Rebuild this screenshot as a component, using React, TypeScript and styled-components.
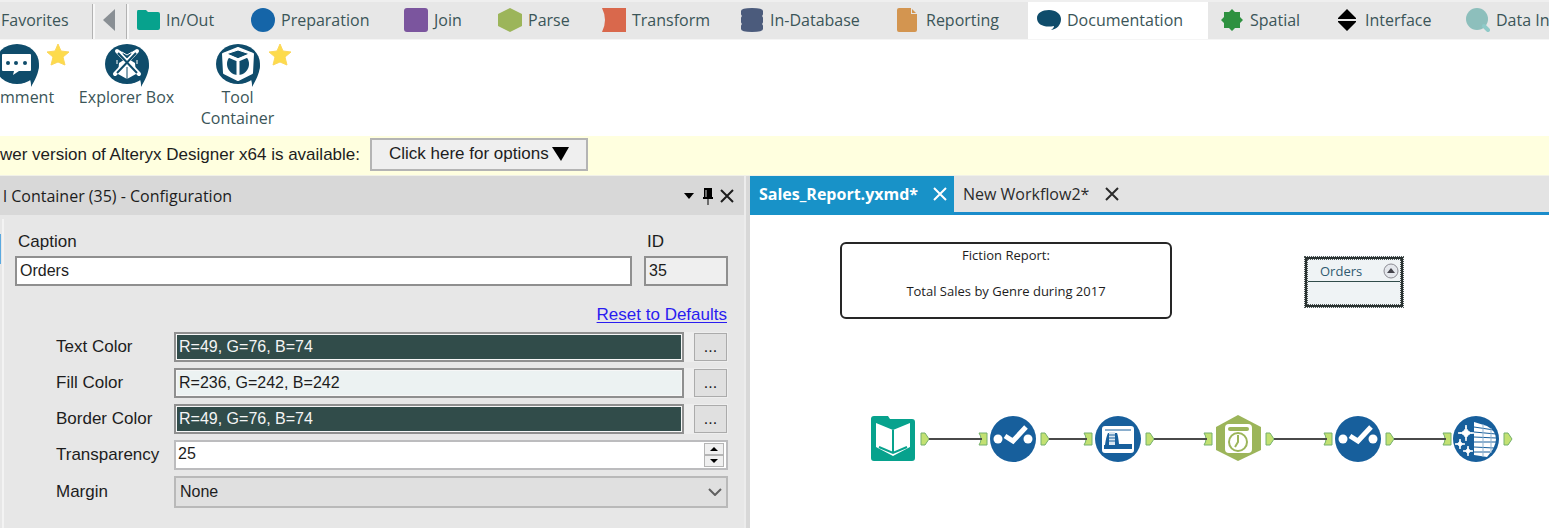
import React from "react";
import styled, { createGlobalStyle } from "styled-components";

const ui = `"Open Sans", "Noto Sans", sans-serif`;
const form = `"Liberation Sans", Arial, sans-serif`;

const GlobalStyle = createGlobalStyle`
  *, *::before, *::after { box-sizing: border-box; }
  body { margin: 0; background: #fff; font-family: ${ui}; font-size: 16px; color: #3b5558; overflow: hidden; }
  button, input, select { font: inherit; color: inherit; margin: 0; border-radius: 0; }
  svg { display: block; flex: none; }
`;

const Page = styled.div`
  display: flex;
  flex-direction: column;
  min-height: 100vh;
  overflow: hidden;
`;

/* ---------- Ribbon ---------- */

const CategoryBar = styled.nav`
  display: flex;
  height: 40px;
  padding-bottom: 1px;
  border-top: 2px solid #efefef;
  background: #e7e7e7;
  box-shadow: inset 0 -1px #f5f5f5;
  overflow: hidden;
`;

const BarButton = styled.button<{ $width: number }>`
  flex: none;
  display: flex;
  align-items: center;
  width: ${(p) => p.$width}px;
  margin: 2px 0 0;
  padding: 0 0 4px 1px;
  border: 0;
  border-right: 1px solid #b2b2b2;
  background: none;
  box-shadow: 2px 0 #f7f7f7;
`;

const ScrollButton = styled(BarButton)`
  padding-left: 10px;
`;

const Category = styled.button<{ $width: number; $active?: boolean }>`
  flex: none;
  display: flex;
  align-items: center;
  gap: 6px;
  width: ${(p) => p.$width}px;
  margin-right: ${(p) => (p.$active ? 3 : 0)}px;
  padding: 0 0 1px 9px;
  border: 0;
  background: ${(p) => (p.$active ? "#fff" : "none")};
  white-space: nowrap;
`;

const Tools = styled.div`
  display: flex;
  align-items: flex-start;
  height: 96px;
  padding-top: 3px;
`;

const Tool = styled.button<{ $cut?: boolean }>`
  position: relative;
  flex: none;
  display: flex;
  flex-direction: column;
  align-items: ${(p) => (p.$cut ? "flex-start" : "center")};
  width: ${(p) => (p.$cut ? 71 : 111)}px;
  padding: 0;
  border: 0;
  background: none;
  line-height: 21px;

  > svg:first-child { margin-left: ${(p) => (p.$cut ? -5 : 0)}px; }
  > span { max-width: 100px; }
`;

const Favorite = styled.svg`
  position: absolute;
  top: 0;
  right: 1px;
`;

const Notice = styled.div`
  display: flex;
  align-items: center;
  gap: 10px;
  height: 40px;
  padding-bottom: 2px;
  border-bottom: 1px solid #f1f1e8;
  background: #ffffdf;
  font: 17px/20px ${form};
  color: #1d1d1d;
  white-space: nowrap;
`;

const NoticeButton = styled.button`
  display: flex;
  align-items: center;
  gap: 3px;
  height: 33px;
  padding: 0 17px 2px 17px;
  border: 2px solid #b4b4b4;
  background: #efefef;
`;

/* ---------- Configuration panel ---------- */

const Workspace = styled.main`
  flex: 1;
  display: grid;
  grid-template-columns: minmax(0, 750fr) minmax(0, 799fr);
`;

const Panel = styled.section`
  display: flex;
  flex-direction: column;
  border-right: 4px solid #d8d8d8;
  box-shadow: inset -2px 0 #ececec;
  background: #e7e7e7;
`;

const PanelTitle = styled.header`
  display: flex;
  align-items: center;
  height: 39px;
  margin-right: 2px;
  padding: 0 7px 0 3px;
  background: #d8d8d8;
  color: #1d1d1d;
`;

const TitleText = styled.h1`
  flex: 1;
  margin: 0;
  font-size: 16px;
  font-weight: 400;
  white-space: nowrap;
`;

const IconButton = styled.button`
  display: flex;
  align-items: center;
  justify-content: center;
  height: 20px;
  padding: 0 3px;
  border: 0;
  background: none;
`;

const PanelBody = styled.div`
  flex: 1;
  display: flex;
`;

const Rail = styled.div`
  width: 4px;
  margin-top: 4px;
  padding-top: 15px;
  border-right: 2px solid #f3f3f3;
`;

const RailMark = styled.div`
  width: 1px;
  height: 30px;
  background: #5aa9e0;
`;

const Form = styled.form`
  flex: 1;
  min-width: 0;
  padding: 17px 18px 20px 11px;
  font: 17px/20px ${form};
  color: #1d1d1d;
`;

const TopFields = styled.div`
  display: flex;
  gap: 12px;
`;

const Field = styled.label<{ $width?: number }>`
  display: flex;
  flex-direction: column;
  gap: 4px;
  flex: ${(p) => (p.$width ? `0 0 ${p.$width}px` : "1")};
  min-width: 0;

  span { padding-left: 3px; }
`;

const TextBox = styled.input<{ $fill?: string; $ink?: string }>`
  width: 100%;
  min-width: 0;
  height: 30px;
  padding: 0 3px 1px;
  border: 2px solid #8f8f8f;
  outline: none;
  background: ${(p) => p.$fill || "#fff"};
  color: ${(p) => p.$ink || "#1d1d1d"};
  font-size: 16px;
`;

const ColorBox = styled(TextBox)`
  padding: 0 3px 1px;
  box-shadow: inset 0 0 0 1px #f7f7f7;
`;

const ResetRow = styled.div`
  display: flex;
  justify-content: flex-end;
  padding: 19px 1px 7px 0;
`;

const ResetLink = styled.a`
  color: #2a1cf0;
  text-decoration: underline;
  text-underline-offset: 2px;
`;

const Rows = styled.div`
  display: grid;
  grid-template-columns: 118px minmax(0, 1fr);
  gap: 6px 0;
  align-items: center;
  padding-left: 41px;
`;

const ColorField = styled.div`
  display: flex;
  align-items: center;
  gap: 10px;
  background: #eeeeee;
`;

const MoreButton = styled.button`
  flex: none;
  width: 33px;
  height: 28px;
  margin-right: 1px;
  padding: 0;
  border: 1px solid #ababab;
  background: #e0e0e0;
  font-size: 16px;
`;

const Spinner = styled.div`
  display: flex;
  height: 30px;
  padding: 1px 2px;
  border: 2px solid #bcbcbe;
  background: #fff;
`;

const NumberBox = styled.input`
  flex: 1;
  min-width: 0;
  padding: 0 0 2px;
  border: 0;
  outline: none;
  background: none;
  font-size: 16px;
  appearance: textfield;

  &::-webkit-inner-spin-button { display: none; }
`;

const Steps = styled.div`
  display: grid;
  grid-template-rows: 1fr 1fr;
  width: 20px;
`;

const Step = styled.button`
  display: flex;
  align-items: center;
  justify-content: center;
  padding: 0;
  border: 1px solid #b5b5b5;
  background: #f0f0f0;
`;

const SelectWrap = styled.div`
  display: grid;
  align-items: center;

  > * { grid-area: 1 / 1; }
  svg { justify-self: end; margin-right: 6px; pointer-events: none; }
`;

const Select = styled.select`
  height: 32px;
  width: 100%;
  padding: 0 4px;
  border: 2px solid #b9b9b9;
  background: #e0e0e0;
  appearance: none;
  font-size: 16px;
`;

/* ---------- Workflow canvas ---------- */

const Documents = styled.section`
  display: flex;
  flex-direction: column;
  background: #fff;
`;

const DocumentTabs = styled.div`
  display: flex;
  height: 39px;
  background: linear-gradient(#1a8ccb, #1a8ccb) bottom / 100% 3px no-repeat #e3e3e3;
`;

const DocumentTab = styled.div<{ $active?: boolean }>`
  display: flex;
  align-items: center;
  justify-content: space-between;
  width: ${(p) => (p.$active ? 204 : 172)}px;
  padding: 0 4px 3px 9px;
  background: ${(p) => (p.$active ? "#1892c8" : "none")};
  color: ${(p) => (p.$active ? "#fff" : "#2b2b2b")};
  font-weight: ${(p) => (p.$active ? 700 : 400)};
  white-space: nowrap;
`;

const Canvas = styled.div`
  position: relative;
  flex: 1;
`;

const CommentNode = styled.div`
  position: absolute;
  left: 90px;
  top: 27px;
  width: 332px;
  height: 77px;
  padding-top: 2px;
  border: 2px solid #262626;
  border-radius: 6px;
  color: #1d1d1d;
  font-size: 13px;
  line-height: 18px;
  text-align: center;
  white-space: pre-line;
`;

const ContainerNode = styled.div`
  position: absolute;
  left: 554px;
  top: 41px;
  width: 100px;
  height: 52px;
  padding: 3px;
  border: 1px dotted #4d5655;
  outline: 1px dotted #4d5655;
  outline-offset: -4px;
  background: #eff3f5;
  box-shadow: inset 0 0 0 2px #2a3231;
`;

const ContainerTitle = styled.div`
  display: flex;
  align-items: center;
  justify-content: space-between;
  height: 22px;
  padding: 0 1px 0 12px;
  border-bottom: 1px solid #314c4a;
  color: #2f5a70;
  font-size: 13px;
`;

const Flow = styled.svg`
  position: absolute;
  left: 110px;
  top: 190px;
`;

/* ---------- Icons ---------- */

const categoryShapes: Record<string, React.ReactNode> = {
  "In/Out": <path d="M2 2h8l2 2h10q2 0 2 2v14q0 2-2 2H3q-2 0-2-2V4q0-2 1-2z" fill="#07a28d" />,
  Preparation: <circle cx="12" cy="12" r="12" fill="#1565a8" />,
  Join: <rect width="24" height="24" rx="3" fill="#7b559e" />,
  Parse: <path d="M12 0l12 6v12l-12 6-12-6V6z" fill="#9cb55a" />,
  Transform: <path d="M0 0h24v24H0q6-12 0-24z" fill="#d9684c" />,
  "In-Database": (
    <path
      d="M1 3q0-3 11-3t11 3v3q0 1-1 2 1 1 1 2v4q0 1-1 2 1 1 1 2v3q0 3-11 3T1 21v-3q0-1 1-2-1-1-1-2v-4q0-1 1-2-1-1-1-2z"
      fill="#4b5b7c"
    />
  ),
  Reporting: (
    <>
      <path d="M3 0h12v6h6v16q0 2-2 2H3q-2 0-2-2V2q0-2 2-2z" fill="#d39550" />
      <path d="M16 1l4 4h-4z" fill="#d39550" />
    </>
  ),
  Documentation: (
    <path d="M12 2c7 0 12 4 12 9 0 6-4 10-10 11 2-1 3-3 3-4C8 20 0 17 0 10 0 5 5 2 12 2z" fill="#0f4c6b" />
  ),
  Spatial: (
    <path
      d="M12 1l3 3 5 0 0 5 3 3-3 3 0 5-5 0-3 3-3-3-5 0 0-5-3-3 3-3 0-5 5 0z"
      fill="#2e9140"
    />
  ),
  Interface: <path d="M12 1l9 9v1H3v-1zM3 13h18v1l-9 9-9-9z" fill="#000" />,
  "Data In": (
    <>
      <circle cx="11" cy="11" r="11" fill="#8dbfbc" />
      <path d="M18 18l4 4" stroke="#8fcac8" strokeWidth="4" strokeLinecap="round" />
    </>
  ),
};

const categories: Array<[string, number]> = [
  ["In/Out", 115],
  ["Preparation", 153],
  ["Join", 94],
  ["Parse", 104],
  ["Transform", 138],
  ["In-Database", 156],
  ["Reporting", 141],
  ["Documentation", 180],
  ["Spatial", 115],
  ["Interface", 131],
  ["Data In", 160],
];

const Bubble = ({ children }: { children: React.ReactNode }) => (
  <svg width="44" height="44" viewBox="0 0 44 44">
    <ellipse cx="22" cy="21" rx="22" ry="20" fill="#0f4c6b" />
    <path d="M44 21c0 9-4 16-8 23 0-4 0-6-2-9z" fill="#0f4c6b" />
    {children}
  </svg>
);

const CommentIcon = () => (
  <Bubble>
    <path d="M8 11h27q1 0 1 1v15q0 1-1 1H24l-6 4 1-4H8q-1 0-1-1V12q0-1 1-1z" fill="#fff" />
    <g fill="#0f4c6b">
      <circle cx="13" cy="20" r="2" />
      <circle cx="21" cy="20" r="2" />
      <circle cx="30" cy="20" r="2" />
    </g>
  </Bubble>
);

const ExplorerIcon = () => (
  <Bubble>
    <path d="M22 15l-8 5-1 11 9 5 9-5-1-11z" fill="#fff" />
    <path d="M22 24v12" stroke="#0f4c6b" strokeWidth="1" />
    <path d="M11 8q4-2 7 2l-3 4zM33 8q-4-2-7 2l3 4z" fill="#fff" />
    <g stroke="#fff" strokeWidth="4" strokeLinecap="round">
      <path d="M12 8l22 23M32 8L10 31" />
    </g>
    <g stroke="#0f4c6b" strokeWidth="2">
      <path d="M13 10l19 20M31 10L12 30" />
    </g>
    <g fill="none" stroke="#fff" strokeWidth="1">
      <path d="M17 9l5 3 5-3M12 17v4M32 17v4" />
    </g>
  </Bubble>
);

const ContainerIcon = () => (
  <Bubble>
    <path
      d="M22 5l15 6-1 19-14 7-14-7-1-19z"
      fill="#fff"
      stroke="#fff"
      strokeWidth="2"
      strokeLinejoin="round"
    />
    <path d="M11 15l22 0 0 13-11 5-11-5z" fill="#fff" />
    <circle cx="22" cy="21" r="11" fill="#0f4c6b" />
    <path d="M22 7l12 4-12 5-12-5z" fill="#0f4c6b" stroke="#fff" strokeWidth="1" />
    <path d="M8 11l14 6 14-6M22 17v19" fill="none" stroke="#fff" strokeWidth="3" />
  </Bubble>
);

const Star = () => (
  <Favorite width="24" height="24" viewBox="0 0 24 24">
    <path d="M12 1l3 7 8 1-6 5 2 8-7-3-7 3 2-8-6-5 8-1z" fill="#fddb4c" stroke="#fcd75a" strokeWidth="1" />
  </Favorite>
);

const Cross = ({ size = 14 }: { size?: number }) => (
  <svg width={size} height={size} viewBox="0 0 14 14">
    <path d="M1 1l12 12M13 1L1 13" stroke="currentColor" strokeWidth="2" />
  </svg>
);

const OutPort = ({ x }: { x: number }) => (
  <path transform={`translate(${x} 27)`} d="M1 1h4l4 6-4 6H1z" fill="#c3e172" stroke="#74b06c" strokeWidth="1" />
);

const InPort = ({ x }: { x: number }) => (
  <path transform={`translate(${x} 27)`} d="M1 1h8v12H1q4-6 0-12z" fill="#c3e172" stroke="#74b06c" strokeWidth="1" />
);

const SelectTool = ({ x }: { x: number }) => (
  <g transform={`translate(${x} 11)`}>
    <circle cx="23" cy="23" r="23" fill="#175f9c" />
    <circle cx="8" cy="23" r="4.5" fill="#fff" />
    <circle cx="38" cy="23" r="4.5" fill="#fff" />
    <path d="M15 20l8 5 13-14" fill="none" stroke="#fff" strokeWidth="5" />
  </g>
);

const sparkle = (x: number, y: number, r: number) =>
  `M${x} ${y - r}Q${x} ${y} ${x + r} ${y}Q${x} ${y} ${x} ${y + r}Q${x} ${y} ${x - r} ${y}Q${x} ${y} ${x} ${y - r}z`;

const wires: Array<[number, number]> = [
  [69, 122],
  [189, 227],
  [294, 347],
  [414, 467],
  [534, 586],
];

const WorkflowDrawing = () => (
  <Flow width="670" height="66" viewBox="0 0 670 66">
    {[118, 223, 343, 463, 582].map((x) => <InPort key={x} x={x} />)}
    {[60, 180, 285, 405, 525, 643].map((x) => <OutPort key={x} x={x} />)}
    {wires.map(([a, b]) => (
      <path key={a} d={`M${a} 34H${b}`} stroke="#4a4a4a" strokeWidth="2" />
    ))}
    <g transform="translate(11 11)">
      <path d="M3 0h14l2 3h22q3 0 3 3v36q0 3-3 3H3q-3 0-3-3V3q0-3 3-3z" fill="#07a28d" />
      <path d="M5 7l17 7 17-7v24l-17 9-17-9z" fill="#fff" />
      <path d="M8 31l14 6 14-6" fill="none" stroke="#07a28d" strokeWidth="2" />
      <path d="M22 14v22" stroke="#07a28d" strokeWidth="2" />
    </g>
    <SelectTool x={130} />
    <g transform="translate(235 11)">
      <circle cx="23" cy="23" r="23" fill="#175f9c" />
      <rect x="8" y="11" width="30" height="25" rx="2" fill="#175f9c" stroke="#fff" strokeWidth="2" />
      <path d="M9 12h28v5H9z" fill="#fff" />
      <path d="M10 14h26" stroke="#175f9c" strokeWidth="1" />
      <path d="M22 17h15v11H24q-1-9-2-11zM9 17h4q-2 4-3 12H9z" fill="#fff" />
      <path d="M9 33h28v2H9z" fill="#fff" />
      <path d="M14 16h6v13h-6z" fill="#dbe7f1" />
      <path d="M14 19h6M14 22h6M14 25h6" stroke="#175f9c" strokeWidth="1" />
    </g>
    <g transform="translate(356 10)">
      <path d="M22 0l23 12v23L22 46 0 35V12z" fill="#9cb55a" />
      <rect x="9" y="9" width="27" height="29" rx="4" fill="#fff" />
      <rect x="12" y="12" width="21" height="4" rx="2" fill="#9cb55a" />
      <circle cx="22" cy="27" r="9" fill="none" stroke="#9cb55a" strokeWidth="2" />
      <path d="M22 20v7l-3 5" fill="none" stroke="#9cb55a" strokeWidth="2" />
    </g>
    <SelectTool x={475} />
    <g transform="translate(593 11)">
      <circle cx="23" cy="23" r="23" fill="#175f9c" />
      <path d={sparkle(13, 17, 8) + sparkle(7, 28, 5) + sparkle(15, 35, 5)} fill="#fff" stroke="#fff" strokeWidth="1" />
      <path d="M21 6l13 4q9 5 9 13t-9 18l-13-2z" fill="#fff" />
      <path
        d="M21 11l20 3M21 16l22 2M21 21l22 1M21 26l22 0M21 31l20 1M21 36l16 0"
        stroke="#175f9c"
        strokeWidth="1"
      />
      <path d="M30 8v33M38 12v25" stroke="#8fb2d0" strokeWidth="1" />
    </g>
  </Flow>
);

/* ---------- Page ---------- */

const colorRows = [
  { id: "text-color", label: "Text Color", value: "R=49, G=76, B=74", fill: "#314c4a", ink: "#f4f4f4" },
  { id: "fill-color", label: "Fill Color", value: "R=236, G=242, B=242", fill: "#ecf2f2", ink: "#1d1d1d" },
  { id: "border-color", label: "Border Color", value: "R=49, G=76, B=74", fill: "#314c4a", ink: "#f4f4f4" },
];

export default function App() {
  return (
    <Page>
      <GlobalStyle />
      <CategoryBar>
        <BarButton $width={93}>Favorites</BarButton>
        <ScrollButton $width={34} aria-label="Scroll left">
          <svg width="12" height="24" viewBox="0 0 12 24">
            <path d="M12 1v22L0 12z" fill="#898f94" />
          </svg>
        </ScrollButton>
        {categories.map(([name, width]) => (
          <Category key={name} $width={width} $active={name === "Documentation"}>
            <svg width="24" height="24" viewBox="0 0 24 24">{categoryShapes[name]}</svg>
            {name}
          </Category>
        ))}
      </CategoryBar>

      <Tools>
        <Tool $cut>
          <CommentIcon />
          <span>mment</span>
          <Star />
        </Tool>
        <Tool>
          <ExplorerIcon />
          <span>Explorer Box</span>
        </Tool>
        <Tool>
          <ContainerIcon />
          <span>Tool Container</span>
          <Star />
        </Tool>
      </Tools>

      <Notice>
        <span>wer version of Alteryx Designer x64 is available:</span>
        <NoticeButton>
          Click here for options
          <svg width="17" height="14" viewBox="0 0 17 14">
            <path d="M0 0h17L9 14z" fill="#000" />
          </svg>
        </NoticeButton>
      </Notice>

      <Workspace>
        <Panel>
          <PanelTitle>
            <TitleText>l Container (35) - Configuration</TitleText>
            <IconButton aria-label="Panel menu">
              <svg width="12" height="6" viewBox="0 0 12 6">
                <path d="M0 0h10L5 6z" fill="#000" />
              </svg>
            </IconButton>
            <IconButton aria-label="Pin panel">
              <svg width="12" height="18" viewBox="0 0 12 18">
                <path d="M2 1h8v9h1v2H1v-2h1z" fill="#000" />
                <path d="M4 3v7" stroke="#d8d8d8" strokeWidth="1" />
                <path d="M6 12v6" stroke="#000" strokeWidth="1" />
              </svg>
            </IconButton>
            <IconButton aria-label="Close panel">
              <Cross />
            </IconButton>
          </PanelTitle>
          <PanelBody>
            <Rail>
              <RailMark />
            </Rail>
            <Form>
              <TopFields>
                <Field>
                  <span>Caption</span>
                  <TextBox defaultValue="Orders" />
                </Field>
                <Field $width={84}>
                  <span>ID</span>
                  <TextBox defaultValue="35" readOnly $fill="#efefef" />
                </Field>
              </TopFields>
              <ResetRow>
                <ResetLink href="#reset">Reset to Defaults</ResetLink>
              </ResetRow>
              <Rows>
                {colorRows.map((row) => (
                  <React.Fragment key={row.id}>
                    <label htmlFor={row.id}>{row.label}</label>
                    <ColorField>
                      <ColorBox id={row.id} defaultValue={row.value} $fill={row.fill} $ink={row.ink} />
                      <MoreButton type="button">...</MoreButton>
                    </ColorField>
                  </React.Fragment>
                ))}
                <label htmlFor="transparency">Transparency</label>
                <Spinner>
                  <NumberBox id="transparency" type="number" defaultValue={25} />
                  <Steps>
                    <Step type="button" aria-label="Increase">
                      <svg width="8" height="4" viewBox="0 0 8 4">
                        <path d="M4 0l4 4H0z" fill="#000" />
                      </svg>
                    </Step>
                    <Step type="button" aria-label="Decrease">
                      <svg width="8" height="4" viewBox="0 0 8 4">
                        <path d="M0 0h8L4 4z" fill="#000" />
                      </svg>
                    </Step>
                  </Steps>
                </Spinner>
                <label htmlFor="margin">Margin</label>
                <SelectWrap>
                  <Select id="margin" defaultValue="None">
                    <option>None</option>
                  </Select>
                  <svg width="14" height="8" viewBox="0 0 14 8">
                    <path d="M1 1l6 6 6-6" fill="none" stroke="#606060" strokeWidth="2" />
                  </svg>
                </SelectWrap>
              </Rows>
            </Form>
          </PanelBody>
        </Panel>

        <Documents>
          <DocumentTabs>
            <DocumentTab $active>
              Sales_Report.yxmd*
              <IconButton aria-label="Close Sales_Report.yxmd">
                <Cross />
              </IconButton>
            </DocumentTab>
            <DocumentTab>
              New Workflow2*
              <IconButton aria-label="Close New Workflow2">
                <Cross />
              </IconButton>
            </DocumentTab>
          </DocumentTabs>
          <Canvas>
            <CommentNode>{"Fiction Report:\n\nTotal Sales by Genre during 2017"}</CommentNode>
            <ContainerNode>
              <ContainerTitle>
                Orders
                <svg width="16" height="16" viewBox="0 0 16 16">
                  <circle cx="8" cy="8" r="7" fill="#e4e7ec" stroke="#8b8b93" strokeWidth="1" />
                  <path d="M8 5l4 5H4z" fill="#44444c" />
                </svg>
              </ContainerTitle>
            </ContainerNode>
            <WorkflowDrawing />
          </Canvas>
        </Documents>
      </Workspace>
    </Page>
  );
}
